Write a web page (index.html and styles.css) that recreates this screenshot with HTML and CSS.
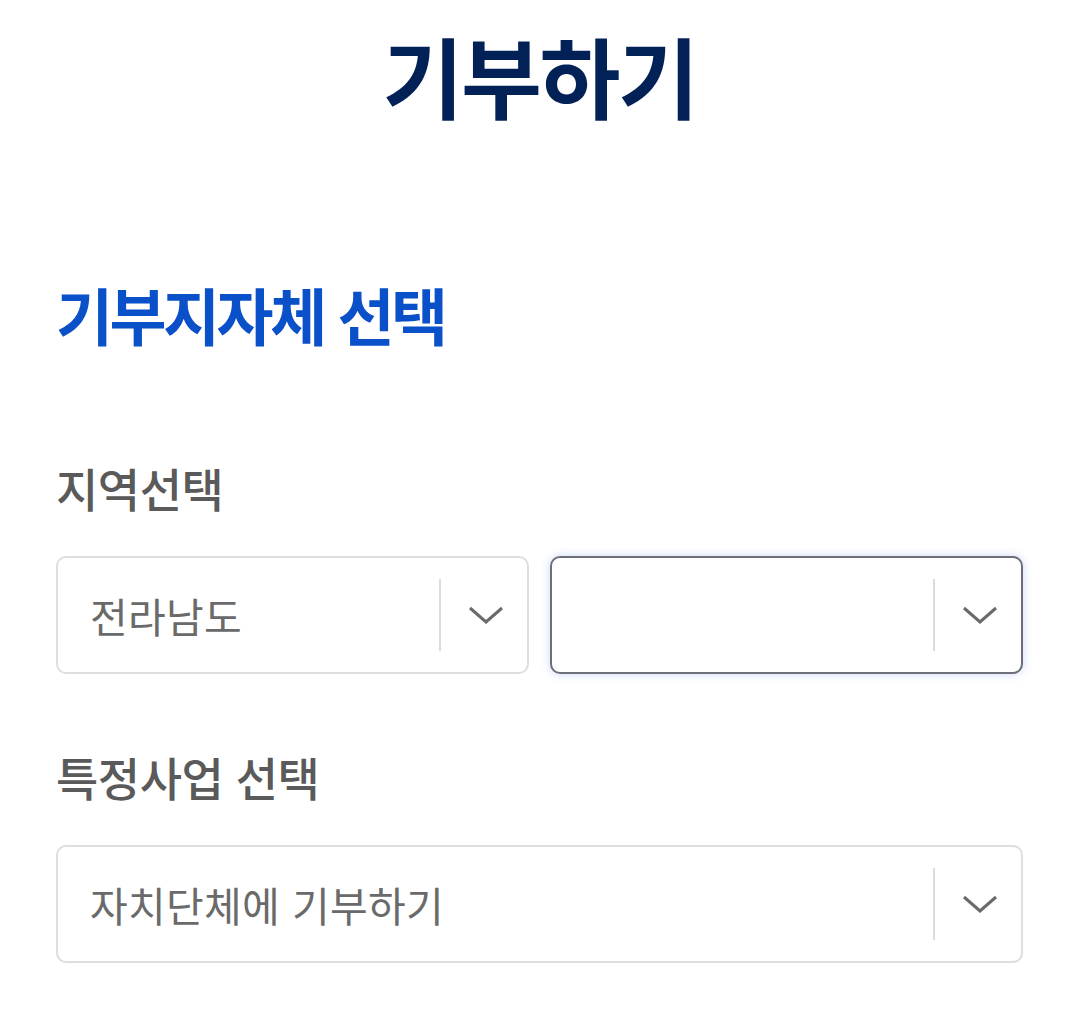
FILE: index.html
```html
<!DOCTYPE html>
<html lang="ko">
<head>
	<meta charset="UTF-8">
	<title>기부하기</title>
	<link rel="stylesheet" href="styles.css">
</head>
<body>
	<div class="page">
		<h1 class="title">기부하기</h1>
		<h2 class="section">기부지자체 선택</h2>

		<div class="label">지역선택</div>
		<div class="row">
			<div class="select">
				<span class="value">전라남도</span>
				<span class="bar"></span>
				<svg class="arrow" viewBox="0 0 36 20" width="36" height="20"><path d="M2 3 L18 17 L34 3" fill="none" stroke="#6a6a6a" stroke-width="3"/></svg>
			</div>
			<div class="select focus">
				<span class="value"></span>
				<span class="bar"></span>
				<svg class="arrow" viewBox="0 0 36 20" width="36" height="20"><path d="M2 3 L18 17 L34 3" fill="none" stroke="#6a6a6a" stroke-width="3"/></svg>
			</div>
		</div>

		<div class="label">특정사업 선택</div>
		<div class="select">
			<span class="value">자치단체에 기부하기</span>
			<span class="bar"></span>
			<svg class="arrow" viewBox="0 0 36 20" width="36" height="20"><path d="M2 3 L18 17 L34 3" fill="none" stroke="#6a6a6a" stroke-width="3"/></svg>
		</div>
	</div>
</body>
</html>
```
FILE: styles.css
```css
*{margin:0;padding:0;box-sizing:border-box;}
body{background:#fff;font-family:"Noto Sans CJK KR","Noto Sans",sans-serif;}
.page{padding:14px 55px 40px 56px;}
.title{text-align:center;font-size:88px;font-weight:700;color:#022157;letter-spacing:-2.5px;line-height:120px;}
.section{margin-top:140px;font-size:62px;font-weight:700;color:#0a50c8;letter-spacing:-3.5px;line-height:80px;}
.label{margin-top:103px;font-size:46px;font-weight:500;color:#5a5a5a;letter-spacing:-.5px;line-height:60px;}
.row{display:flex;gap:21px;}
.row .select{flex:1;}
.select{margin-top:39px;height:118px;border:2px solid #dedede;border-radius:10px;display:flex;align-items:center;padding:0 23px 0 32px;background:#fff;}
.row + .label{margin-top:72px;}
.select.focus{border-color:#6d7079;box-shadow:0 0 10px rgba(80,130,230,.3);}
.value{flex:1;font-size:41px;color:#6a6a6a;letter-spacing:.3px;}
.bar{width:2px;height:72px;background:#dcdcdc;margin-right:27px;}
.arrow{display:block;}
```
